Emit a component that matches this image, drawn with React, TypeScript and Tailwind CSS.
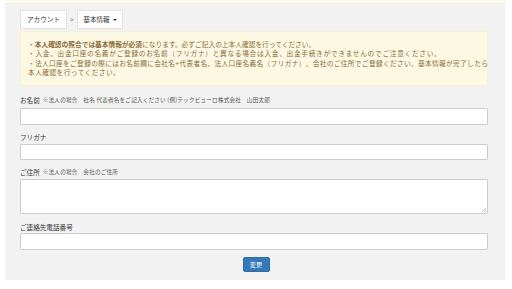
import React from "react";

const Label = ({ children, mt }: { children: React.ReactNode; mt: string }) => (
  <div className={`${mt} h-[8px] flex items-center text-[6.6px] leading-[8px] text-[#333] whitespace-nowrap [text-spacing-trim:space-all]`}>{children}</div>
);

export default function App() {
  return (
    <div className="w-[512px] h-[289px] bg-white overflow-hidden font-['Noto_Sans_CJK_JP',sans-serif]">
      <div className="ml-[5px] w-[500px]">
        <div className="h-[4px] bg-[#fcfaf0] border-b border-[#f3efdf]" />
        <div className="bg-[#f2f2f2] h-[276px] pl-[15px] pr-[17px] pt-[6px]">
          <div className="flex items-center h-[19px]">
            <div className="h-[19px] w-[47px] bg-white border border-[#e2e2e2] flex items-center justify-center text-[6.6px] text-[#333]">アカウント</div>
            <div className="w-[10px] text-center text-[6px] text-[#555]">&gt;</div>
            <div className="h-[19px] w-[46px] bg-white border border-[#e2e2e2] flex items-center justify-center gap-[3px] text-[6.6px] text-[#333]">
              <span>基本情報</span>
              <span className="w-0 h-0 border-l-[2px] border-r-[2px] border-t-[2.5px] border-l-transparent border-r-transparent border-t-[#333]" />
            </div>
          </div>
          <div className="mt-[2px] h-[55px] bg-[#fcf8e3] border border-[#faf0d0] pl-[7px] pr-[1px] pt-[8px] text-[6.7px] leading-[9.3px] text-[#8a6d3b] whitespace-nowrap [text-spacing-trim:space-all]">
            <div className="tracking-[0.02px]">・<b>本人確認の照合では基本情報が必須</b>になります。必ずご記入の上本人確認を行ってください。</div>
            <div className="tracking-[0.7px]">・入金、出金口座の名義がご登録のお名前（フリガナ）と異なる場合は入金、出金手続きができませんのでご注意ください。</div>
            <div className="tracking-[0.33px]">・法人口座をご登録の際にはお名前欄に会社名+代表者名、法人口座名義名（フリガナ）、会社のご住所でご登録ください。基本情報が完了したら</div>
            <div className="tracking-[0.45px]">本人確認を行ってください。</div>
          </div>
          <Label mt="mt-[10px]">
            お名前<span className="ml-[3px] text-[5.6px] tracking-[0.2px] text-[#555]">※法人の場合　社名 代表者名をご記入ください (例)テックビューロ株式会社　山田太郎</span>
          </Label>
          <div className="mt-[4px] h-[17px] bg-white border border-[#cccccc] rounded-[1px]" />
          <Label mt="mt-[8px]">フリガナ</Label>
          <div className="mt-[3px] h-[16px] bg-white border border-[#cccccc] rounded-[1px]" />
          <Label mt="mt-[8px]">
            ご住所<span className="ml-[3px] text-[5.6px] tracking-[0.2px] text-[#555]">※法人の場合　会社のご住所</span>
          </Label>
          <div className="mt-[3px] h-[35px] bg-white border border-[#cccccc] rounded-[1px] relative">
            <svg className="absolute right-[1px] bottom-[1px]" width="4" height="4" viewBox="0 0 4 4">
              <path d="M4 0 L0 4 M4 2 L2 4" stroke="#999" strokeWidth="0.6" />
            </svg>
          </div>
          <Label mt="mt-[9px]">ご連絡先電話番号</Label>
          <div className="mt-[2px] h-[17px] bg-white border border-[#cccccc] rounded-[1px]" />
          <div className="mt-[7px] flex justify-center">
            <div className="ml-[4px] h-[15px] w-[27px] bg-[#337ab7] border border-[#2e6da4] rounded-[2px] flex items-center justify-center text-[6.2px] text-white">変更</div>
          </div>
        </div>
      </div>
    </div>
  );
}
